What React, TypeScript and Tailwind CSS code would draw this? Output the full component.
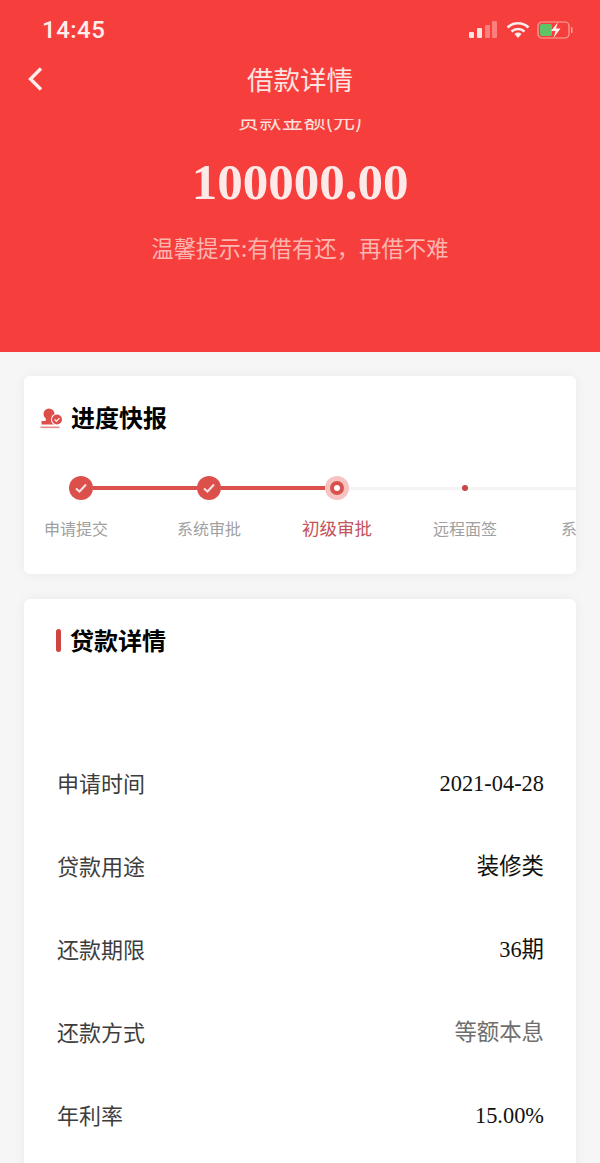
const CJK = "font-['Noto_Sans_CJK_SC',sans-serif]";

const steps = [
  { label: '申请提交', state: 'done' },
  { label: '系统审批', state: 'done' },
  { label: '初级审批', state: 'current' },
  { label: '远程面签', state: 'todo' },
  { label: '系统放款', state: 'todo' },
];

const rows = [
  { label: '申请时间', value: '2021-04-28', tone: 'text-[#111]' },
  { label: '贷款用途', value: '装修类', tone: 'text-[#111]' },
  { label: '还款期限', value: '36期', tone: 'text-[#111]' },
  { label: '还款方式', value: '等额本息', tone: 'text-[#6e6e6e]' },
  { label: '年利率', value: '15.00%', tone: 'text-[#111]' },
];

function StatusIcons() {
  return (
    <div className="flex items-center">
      <svg width="30" height="18" viewBox="0 0 30 18">
        <rect x="0" y="11" width="5" height="6" rx="1" fill="#fde3e0" />
        <rect x="8" y="7" width="5" height="10" rx="1" fill="#fde3e0" />
        <rect x="16" y="4" width="5" height="13" rx="1" fill="#fb7f7a" />
        <rect x="23" y="0" width="5" height="17" rx="1" fill="#fb7f7a" />
      </svg>
      <svg className="ml-[7px]" width="24" height="18" viewBox="0 0 24 18">
        <path d="M1.5 6.5a15 15 0 0 1 21 0" fill="none" stroke="#fdeeec" strokeWidth="2.6" />
        <path d="M5.5 10.5a9.5 9.5 0 0 1 13 0" fill="none" stroke="#fdeeec" strokeWidth="2.6" />
        <path d="M8.5 13a5 5 0 0 1 7 0L12 17z" fill="#fdeeec" />
      </svg>
      <svg className="ml-[7px]" width="38" height="18" viewBox="0 0 38 18">
        <rect x="1" y="1" width="31" height="16" rx="4" fill="none" stroke="#f9a79f" strokeWidth="1.2" />
        <rect x="3" y="3" width="12" height="12" rx="2" fill="#5fc468" />
        <path d="M21 1l-7 9h4.5l-2 7 7-9.5h-4.5z" fill="#fdf3f0" />
        <rect x="34" y="6" width="1.5" height="6" rx="0.75" fill="#f9a79f" />
      </svg>
    </div>
  );
}

function StampIcon() {
  return (
    <svg className="mt-1" width="24" height="22" viewBox="0 0 24 22">
      <circle cx="9" cy="6" r="5.5" fill="#dd4f4a" />
      <path d="M6.5 9h5l1 4H16v3.5H1.5V13h4z" fill="#dd4f4a" />
      <rect x="0.5" y="18.5" width="19" height="1.6" fill="#e98a86" />
      <circle cx="17" cy="11.5" r="6" fill="#fff" />
      <circle cx="17" cy="11.5" r="5" fill="#dd4f4a" />
      <path d="M14.7 11.5l1.7 1.7 3-3.1" fill="none" stroke="#fff" strokeWidth="1.1" />
    </svg>
  );
}

function StepNode({ state }: { state: string }) {
  if (state === 'done') {
    return (
      <div className="flex h-6 w-6 shrink-0 items-center justify-center rounded-full bg-[#dc504c]">
        <svg width="14" height="12" viewBox="0 0 14 12">
          <path d="M2 6.5l3.5 3L12 2.5" fill="none" stroke="#f8e3e2" strokeWidth="2" />
        </svg>
      </div>
    );
  }
  if (state === 'current') {
    return (
      <div className="flex h-6 w-6 shrink-0 items-center justify-center rounded-full bg-[#f6c3c1]">
        <div className="flex h-[14px] w-[14px] items-center justify-center rounded-full bg-[#d9504c]">
          <div className="h-[6px] w-[6px] rounded-full bg-white" />
        </div>
      </div>
    );
  }
  return (
    <div className="flex h-[3px] w-6 shrink-0 items-center justify-center bg-[#f5f3f3]">
      <div className="h-[6px] w-[6px] shrink-0 rounded-full bg-[#c8454a]" />
    </div>
  );
}

export default function App() {
  return (
    <div className={`h-[1163px] w-[600px] overflow-hidden bg-[#f6f6f6] ${CJK}`}>
      {/* red header */}
      <div className="h-[352px] overflow-hidden bg-[#f63f3c] text-white">
        <div className="flex h-[60px] items-start justify-between pl-[42px] pr-[25px] pt-[15px]">
          <span className="font-['Roboto',sans-serif] text-[24px] font-medium leading-[30px] tracking-[0.5px] text-[#fdeeec]">14:45</span>
          <div className="pt-[6px]">
            <StatusIcons />
          </div>
        </div>
        <div className="relative flex h-[59px] items-start justify-center">
          <svg className="absolute left-[26px] top-[6px]" width="20" height="26" viewBox="0 0 20 26">
            <path d="M15 2.5L4.5 13 15 23.5" fill="none" stroke="#fdeeec" strokeWidth="3.4" />
          </svg>
          <span className="-mt-px text-[26.5px] leading-10 text-[#fde4e2]">借款详情</span>
        </div>
        <div className="h-[233px] overflow-hidden text-center">
          <div className="-mt-[15px] text-[22px] leading-[28px] text-[#fde0de]">贷款金额(元)</div>
          <div className="mt-[20px] font-['Liberation_Serif',serif] text-[51px] font-bold leading-[60px] text-[#fdeae8]">100000.00</div>
          <div className="mt-[19px] text-[22.4px] leading-[32px] text-[#fcb5b1]">温馨提示:有借有还，再借不难</div>
        </div>
      </div>

      <div className="flex flex-col gap-[25px] px-6 pt-6">
        {/* progress card */}
        <div className="h-[198px] overflow-hidden rounded-md bg-white shadow-[0_0_12px_rgba(0,0,0,0.05)]">
          <div className="flex items-center pl-4 pt-6">
            <StampIcon />
            <span className="ml-[7px] text-[24px] font-semibold leading-[34px] text-black">进度快报</span>
          </div>
          <div className="-ml-[7px] mt-[42px] flex w-[640px]">
            {steps.map((s, i) => (
              <div key={s.label} className="flex w-[128px] shrink-0 flex-col items-center">
                <div className="flex h-6 w-full items-center">
                  <div className={`flex-1 ${i === 0 ? '' : i <= 2 ? 'h-1 bg-[#d9504c]' : 'h-[3px] bg-[#f5f3f3]'}`} />
                  <StepNode state={s.state} />
                  <div className={`flex-1 ${i < 2 ? 'h-1 bg-[#d9504c]' : 'h-[3px] bg-[#f5f3f3]'}`} />
                </div>
                {s.state === 'current' ? (
                  <div className="mt-[14px] text-[17.5px] leading-[28px] text-[#c4525a]">{s.label}</div>
                ) : (
                  <div className={`mt-[14px] text-[16px] leading-[28px] text-[#a0a0a0] ${i === 0 ? 'mr-[10px]' : ''}`}>{s.label}</div>
                )}
              </div>
            ))}
          </div>
        </div>

        {/* loan details card */}
        <div className="h-[600px] rounded-md bg-white pl-8 pr-8 pt-6 shadow-[0_0_12px_rgba(0,0,0,0.05)]">
          <div className="flex items-center">
            <div className="h-[23px] w-[5px] rounded-sm bg-[#cf4440]" />
            <span className="ml-[9px] text-[24px] font-semibold leading-[34px] text-black">贷款详情</span>
          </div>
          <div className="mt-[109px] flex flex-col gap-[51px]">
            {rows.map(r => (
              <div key={r.label} className="flex h-8 items-center justify-between">
                <span className="pl-px text-[22px] leading-8 text-[#3d3d3d]">{r.label}</span>
                <span className={`pt-1 font-['Liberation_Serif','Noto_Sans_CJK_SC',serif] text-[22.4px] leading-8 ${r.tone}`}>{r.value}</span>
              </div>
            ))}
          </div>
        </div>
      </div>
    </div>
  );
}
